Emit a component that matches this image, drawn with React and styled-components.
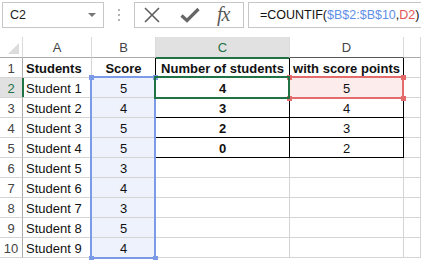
import React from 'react';
import styled, { createGlobalStyle, css } from 'styled-components';

const GREEN = '#217346';
const GRID = '#d4d4d4';
const BLUE = '#7b9be6';
const RED = '#e46b6b';

const GlobalStyle = createGlobalStyle`
  html, body {
    margin: 0;
    background: #fff;
    font-family: "Liberation Sans", Arial, sans-serif;
  }
`;

const Page = styled.div`
  width: 421px;
  height: 260px;
  overflow: hidden;
  background: #fff;
`;

const FormulaBar = styled.div`
  display: flex;
  height: 26px;
  padding-top: 2px;
  margin-bottom: 9px;
`;

const NameBox = styled.div`
  box-sizing: border-box;
  width: 102px;
  margin-left: 2px;
  border: 1px solid #c6c6c6;
  display: flex;
  align-items: center;
  justify-content: space-between;
  padding: 0 7px 0 7px;
  font-size: 12.5px;
  color: #222;
`;

const Caret = styled.span`
  width: 0;
  height: 0;
  border-left: 4px solid transparent;
  border-right: 4px solid transparent;
  border-top: 4px solid #777;
`;

const Dots = styled.div`
  width: 30px;
  display: flex;
  flex-direction: column;
  align-items: center;
  justify-content: center;
  gap: 3px;
  span {
    width: 2px;
    height: 2px;
    background: #b4b4b4;
  }
`;

const ButtonBox = styled.div`
  box-sizing: border-box;
  width: 110px;
  border: 1px solid #c6c6c6;
  display: flex;
  align-items: center;
  padding-left: 8px;
  gap: 19px;
  color: #666;
`;

const FxText = styled.span`
  font-family: "Liberation Serif", "Times New Roman", serif;
  font-style: italic;
  font-size: 20px;
  color: #5a5a5a;
  letter-spacing: -1px;
  margin-left: -2px;
  margin-top: -2px;
`;

const FormulaBox = styled.div`
  box-sizing: border-box;
  flex: 1;
  margin-left: 4px;
  border: 1px solid #c6c6c6;
  border-right: none;
  display: flex;
  align-items: center;
  padding-left: 11px;
  font-size: 12.5px;
  color: #111;
  white-space: nowrap;
`;

const Ref = styled.span`
  color: ${p => p.$color};
`;

const Sheet = styled.div`
  display: grid;
  grid-template-columns: 23px 69px 64px 134px 114px 1fr;
  grid-template-rows: 21px repeat(10, 20px);
  font-size: 13px;
  color: #111;
`;

const Cell = styled.div`
  box-sizing: border-box;
  position: relative;
  border-right: 1px solid ${p => (p.$table ? '#000' : GRID)};
  border-bottom: 1px solid ${p => (p.$table ? '#000' : GRID)};
  display: flex;
  align-items: center;
  justify-content: ${p => (p.$left ? 'flex-start' : 'center')};
  padding-left: ${p => (p.$left ? '3px' : '0')};
  padding-top: 1px;
  font-weight: ${p => (p.$bold ? 700 : 400)};
  white-space: nowrap;
  background: ${p => p.$fill || 'transparent'};
`;

const ColHead = styled.div`
  box-sizing: border-box;
  position: relative;
  border-right: 1px solid #dadada;
  border-bottom: 1px solid ${p => p.$dark ? '#555' : '#ababab'};
  display: flex;
  align-items: center;
  justify-content: center;
  color: #444;
  font-size: 13px;
  ${p => p.$active && css`
    background: #e1e1e1;
    color: ${GREEN};
    border-bottom: 2px solid ${GREEN};
    margin-bottom: -1px;
  `}
`;

const RowHead = styled.div`
  box-sizing: border-box;
  border-right: 1px solid #ababab;
  border-bottom: 1px solid ${GRID};
  display: flex;
  align-items: center;
  justify-content: center;
  padding-top: 1px;
  color: #444;
  font-size: 13px;
  ${p => p.$active && css`
    background: #e1e1e1;
    color: ${GREEN};
    border-right: 2px solid ${GREEN};
    margin-right: -1px;
  `}
`;

const Corner = styled.div`
  box-sizing: border-box;
  border-right: 1px solid #dadada;
  border-bottom: 1px solid #ababab;
  position: relative;
  &::after {
    content: '';
    position: absolute;
    right: 3px;
    bottom: 3px;
    width: 0;
    height: 0;
    border-left: 11px solid transparent;
    border-bottom: 11px solid #dcdcdc;
  }
`;

const Frame = styled.div`
  position: absolute;
  top: -2px;
  left: -2px;
  right: -1px;
  height: ${p => p.$rows * 20 + 3}px;
  border: 2px solid ${p => p.$color};
  box-sizing: border-box;
  pointer-events: none;
  z-index: ${p => p.$z || 1};
`;

const Handle = styled.span`
  position: absolute;
  width: 5px;
  height: 5px;
  background: ${p => p.$color};
  ${p => (p.$top ? 'top: -3.5px;' : 'bottom: -3.5px;')}
  ${p => (p.$lft ? 'left: -3.5px;' : 'right: -3.5px;')}
`;

const Handles = ({ color }) => (
  <>
    <Handle $color={color} $top $lft />
    <Handle $color={color} $top />
    <Handle $color={color} $lft />
    <Handle $color={color} />
  </>
);

const rows = [
  ['Students', 'Score', 'Number of students', 'with score points'],
  ['Student 1', '5', '4', '5'],
  ['Student 2', '4', '3', '4'],
  ['Student 3', '5', '2', '3'],
  ['Student 4', '5', '0', '2'],
  ['Student 5', '3', '', ''],
  ['Student 6', '4', '', ''],
  ['Student 7', '3', '', ''],
  ['Student 8', '5', '', ''],
  ['Student 9', '4', '', ''],
];

const CancelIcon = () => (
  <svg width="18" height="16" viewBox="0 0 18 16">
    <path d="M2 1 L16 15 M16 1 L2 15" stroke="#5f5f5f" strokeWidth="1.6" fill="none" />
  </svg>
);

const CheckIcon = () => (
  <svg width="20" height="16" viewBox="0 0 20 16">
    <path d="M1.5 8.5 L7 13.5 L18.5 2" stroke="#666" strokeWidth="3.2" fill="none" strokeLinejoin="miter" />
  </svg>
);

export default function App() {
  return (
    <Page>
      <GlobalStyle />
      <FormulaBar>
        <NameBox>
          C2
          <Caret />
        </NameBox>
        <Dots>
          <span />
          <span />
          <span />
        </Dots>
        <ButtonBox>
          <CancelIcon />
          <CheckIcon />
          <FxText>fx</FxText>
        </ButtonBox>
        <FormulaBox>
          =COUNTIF(<Ref $color="#5f8fe6">$B$2:$B$10</Ref>,<Ref $color="#e05555">D2</Ref>)
        </FormulaBox>
      </FormulaBar>

      <Sheet>
        <Corner />
        <ColHead>A</ColHead>
        <ColHead>B</ColHead>
        <ColHead $active>C</ColHead>
        <ColHead $dark>D</ColHead>
        <ColHead />
        {rows.map((r, i) => {
          const n = i + 1;
          const inTable = n <= 5;
          return (
            <React.Fragment key={n}>
              <RowHead $active={n === 2}>{n}</RowHead>
              <Cell $left $bold={n === 1}>{r[0]}</Cell>
              <Cell
                $bold={n === 1}
                $table={n === 1}
                $fill={n >= 2 ? '#eef2fc' : undefined}
              >
                {r[1]}
                {n === 2 && (
                  <Frame $rows={9} $color={BLUE}>
                    <Handles color={BLUE} />
                  </Frame>
                )}
              </Cell>
              <Cell $bold $table={inTable}>
                {r[2]}
                {n === 2 && <Frame $rows={1} $color={GREEN} $z={3} />}
              </Cell>
              <Cell $bold={n === 1} $table={inTable} $fill={n === 2 ? '#fcecec' : undefined}>
                {r[3]}
                {n === 2 && (
                  <Frame $rows={1} $color={RED} $z={2}>
                    <Handles color={RED} />
                  </Frame>
                )}
              </Cell>
              <Cell />
            </React.Fragment>
          );
        })}
      </Sheet>
    </Page>
  );
}
